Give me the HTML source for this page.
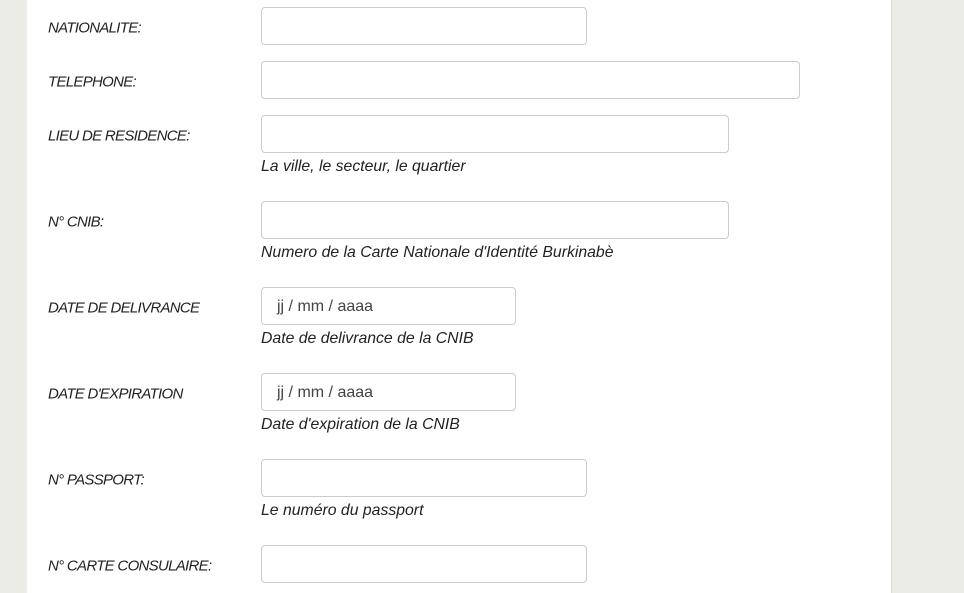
<!DOCTYPE html>
<html><head><style>
body{margin:0;width:964px;height:593px;background:#ecece6;font-family:"Liberation Sans",sans-serif;overflow:hidden;position:relative}
.panel{position:absolute;left:27px;top:0;width:864px;height:593px;background:#fff;border-right:1px solid #ddd}
.l{position:absolute;left:48px;font-style:italic;font-size:15px;letter-spacing:-0.7px;color:#222;transform:translateY(-50%);margin-top:1px}
.i{position:absolute;left:261px;height:36px;border:1px solid #ccc;border-radius:4px;background:#fff;box-sizing:border-box}
.h{position:absolute;left:261px;font-style:italic;font-size:15.8px;color:#222;transform:translateY(-50%);margin-top:1px}
.d{font-size:16px;color:#444;padding:10px 0 0 15px;font-family:"Liberation Sans",sans-serif}
</style></head><body>
<div class="panel"></div>
<div class="l" style="top:27px">NATIONALITE:</div><div class="i" style="top:7px;width:326px;height:38px"></div>
<div class="l" style="top:81px">TELEPHONE:</div><div class="i" style="top:61px;width:539px;height:38px"></div>
<div class="l" style="top:135px">LIEU DE RESIDENCE:</div><div class="i" style="top:115px;width:468px;height:38px"></div>
<div class="h" style="top:166px">La ville, le secteur, le quartier</div>
<div class="l" style="top:221px">N° CNIB:</div><div class="i" style="top:201px;width:468px;height:38px"></div>
<div class="h" style="top:252px">Numero de la Carte Nationale d'Identité Burkinabè</div>
<div class="l" style="top:307px">DATE DE DELIVRANCE</div><div class="i d" style="top:287px;width:255px;height:38px">jj / mm / aaaa</div>
<div class="h" style="top:338px">Date de delivrance de la CNIB</div>
<div class="l" style="top:393px">DATE D'EXPIRATION</div><div class="i d" style="top:373px;width:255px;height:38px">jj / mm / aaaa</div>
<div class="h" style="top:424px">Date d'expiration de la CNIB</div>
<div class="l" style="top:479px">N° PASSPORT:</div><div class="i" style="top:459px;width:326px;height:38px"></div>
<div class="h" style="top:510px">Le numéro du passport</div>
<div class="l" style="top:565px">N° CARTE CONSULAIRE:</div><div class="i" style="top:545px;width:326px;height:38px"></div>
</body></html>
